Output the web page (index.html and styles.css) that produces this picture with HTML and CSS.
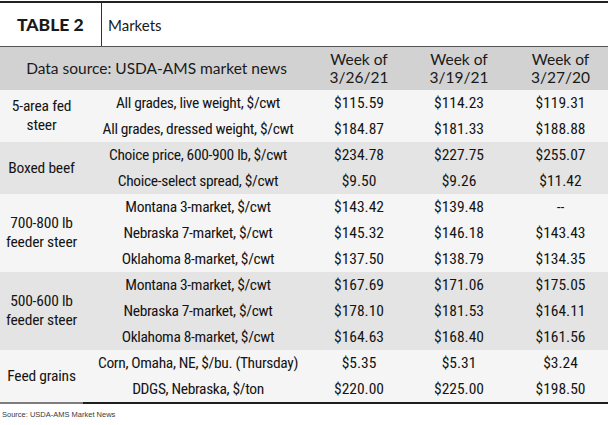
FILE: index.html
```html
<!DOCTYPE html>
<html>
<head>
<meta charset="utf-8">
<link rel="stylesheet" href="styles.css">
</head>
<body>
<div class="page">
  <div class="title-band">
    <div class="title-label">TABLE 2</div>
    <div class="title-text">Markets</div>
  </div>
  <table class="markets">
    <colgroup>
      <col class="c-group">
      <col class="c-desc">
      <col class="c-v1">
      <col class="c-v2">
      <col class="c-v3">
    </colgroup>
    <thead>
      <tr>
        <th colspan="2" class="h-source">Data source: USDA-AMS market news</th>
        <th>Week of<br>3/26/21</th>
        <th>Week of<br>3/19/21</th>
        <th>Week of<br>3/27/20</th>
      </tr>
    </thead>
    <tbody class="g-light">
      <tr><td rowspan="2" class="grp">5-area fed<br>steer</td><td class="desc">All grades, live weight, $/cwt</td><td>$115.59</td><td>$114.23</td><td>$119.31</td></tr>
      <tr><td class="desc">All grades, dressed weight, $/cwt</td><td>$184.87</td><td>$181.33</td><td>$188.88</td></tr>
    </tbody>
    <tbody class="g-dark">
      <tr><td rowspan="2" class="grp">Boxed beef</td><td class="desc">Choice price, 600-900 lb, $/cwt</td><td>$234.78</td><td>$227.75</td><td>$255.07</td></tr>
      <tr><td class="desc">Choice-select spread, $/cwt</td><td>$9.50</td><td>$9.26</td><td>$11.42</td></tr>
    </tbody>
    <tbody class="g-light">
      <tr><td rowspan="3" class="grp">700-800 lb<br>feeder steer</td><td class="desc">Montana 3-market, $/cwt</td><td>$143.42</td><td>$139.48</td><td>--</td></tr>
      <tr><td class="desc">Nebraska 7-market, $/cwt</td><td>$145.32</td><td>$146.18</td><td>$143.43</td></tr>
      <tr><td class="desc">Oklahoma 8-market, $/cwt</td><td>$137.50</td><td>$138.79</td><td>$134.35</td></tr>
    </tbody>
    <tbody class="g-dark">
      <tr><td rowspan="3" class="grp">500-600 lb<br>feeder steer</td><td class="desc">Montana 3-market, $/cwt</td><td>$167.69</td><td>$171.06</td><td>$175.05</td></tr>
      <tr><td class="desc">Nebraska 7-market, $/cwt</td><td>$178.10</td><td>$181.53</td><td>$164.11</td></tr>
      <tr><td class="desc">Oklahoma 8-market, $/cwt</td><td>$164.63</td><td>$168.40</td><td>$161.56</td></tr>
    </tbody>
    <tbody class="g-light last">
      <tr><td rowspan="2" class="grp">Feed grains</td><td class="desc">Corn, Omaha, NE, $/bu. (Thursday)</td><td>$5.35</td><td>$5.31</td><td>$3.24</td></tr>
      <tr><td class="desc">DDGS, Nebraska, $/ton</td><td>$220.00</td><td>$225.00</td><td>$198.50</td></tr>
    </tbody>
  </table>
  <div class="source">Source: USDA-AMS Market News</div>
</div>
</body>
</html>
```

FILE: styles.css
```css
html, body {
  margin: 0;
  padding: 0;
  background: #ffffff;
}

.page {
  width: 608px;
}

.title-band {
  display: flex;
  align-items: stretch;
  height: 43px;
  margin-top: 1px;
  border-top: 2px solid #222;
  border-bottom: 1px solid #555;
  font-family: "Lato", "Noto Sans", sans-serif;
  color: #1a1a1a;
}

.title-label {
  width: 102px;
  border-right: 1px solid #333;
  display: flex;
  align-items: center;
  padding-left: 17px;
  box-sizing: border-box;
  font-weight: 900;
  font-size: 17.5px;
}

.title-text {
  display: flex;
  align-items: center;
  padding-left: 6px;
  font-size: 15px;
}

.markets {
  width: 608px;
  border-collapse: collapse;
  table-layout: fixed;
  font-family: "Liberation Sans Narrow", "Roboto Condensed", "DejaVu Sans Condensed", sans-serif;
  font-size: 15.5px;
  color: #141414;
}

.c-group { width: 83px; }
.c-desc { width: 230px; }
.c-v1 { width: 92px; }
.c-v2 { width: 108px; }
.c-v3 { width: 95px; }

.markets th {
  background: #d2d2d2;
  height: 43px;
  padding: 0;
  font-family: "Lato", "Noto Sans", sans-serif;
  font-weight: 400;
  font-size: 15.5px;
  line-height: 17.5px;
  color: #1a1a1a;
  text-align: center;
  vertical-align: middle;
}

.markets td {
  height: 26px;
  padding: 0;
  text-align: center;
  vertical-align: middle;
  line-height: 18px;
  white-space: nowrap;
}

.markets td.desc {
  letter-spacing: -0.35px;
}

.markets td.grp {
  line-height: 19px;
  letter-spacing: -0.2px;
}

.g-light td { background: #f5f5f5; }
.g-dark td { background: #e4e4e4; }

.last tr:last-child td {
  border-bottom: 2px solid #1e1e1e;
}

.last td.grp {
  border-bottom: 2px solid #7d7d7d;
}

.source {
  margin-top: 6px;
  padding-left: 2px;
  font-family: "Liberation Sans", Arial, sans-serif;
  font-size: 7.5px;
  color: #3a3a3a;
}
```
